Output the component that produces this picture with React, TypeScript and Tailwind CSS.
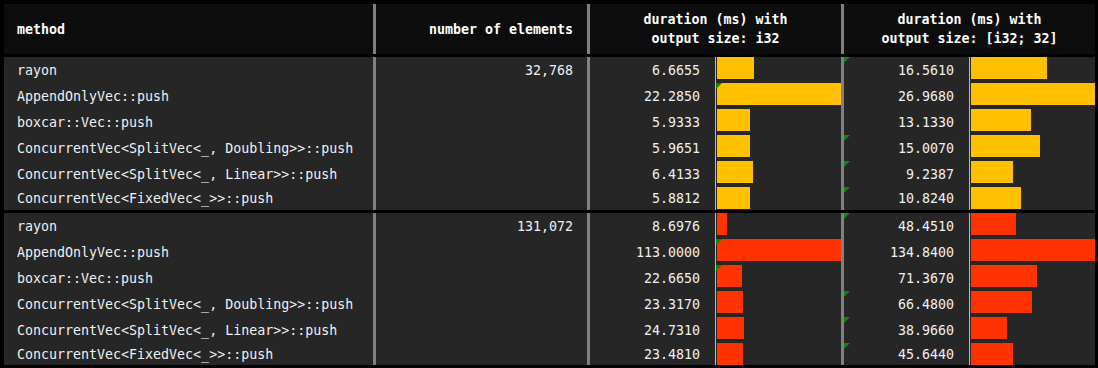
import React from "react";

interface BenchRow {
    method: string;
    small: number;
    large: number;
    flagSmallBar?: boolean;
    flagLarge?: boolean;
}

interface BenchGroup {
    count: string;
    color: string;
    rows: BenchRow[];
}

const groups: BenchGroup[] = [
    {
        count: "32,768",
        color: "#ffc000",
        rows: [
            { method: "rayon", small: 6.6655, large: 16.561, flagLarge: true },
            { method: "AppendOnlyVec::push", small: 22.285, large: 26.968, flagSmallBar: true },
            { method: "boxcar::Vec::push", small: 5.9333, large: 13.133 },
            { method: "ConcurrentVec<SplitVec<_, Doubling>>::push", small: 5.9651, large: 15.007, flagLarge: true },
            { method: "ConcurrentVec<SplitVec<_, Linear>>::push", small: 6.4133, large: 9.2387, flagLarge: true },
            { method: "ConcurrentVec<FixedVec<_>>::push", small: 5.8812, large: 10.824, flagLarge: true },
        ],
    },
    {
        count: "131,072",
        color: "#ff3300",
        rows: [
            { method: "rayon", small: 8.6976, large: 48.451, flagLarge: true },
            { method: "AppendOnlyVec::push", small: 113.0, large: 134.84, flagSmallBar: true },
            { method: "boxcar::Vec::push", small: 22.665, large: 71.367, flagSmallBar: true },
            { method: "ConcurrentVec<SplitVec<_, Doubling>>::push", small: 23.317, large: 66.48, flagLarge: true },
            { method: "ConcurrentVec<SplitVec<_, Linear>>::push", small: 24.731, large: 38.966, flagLarge: true },
            { method: "ConcurrentVec<FixedVec<_>>::push", small: 23.481, large: 45.644, flagLarge: true },
        ],
    },
];

const BAR_AREA = 124;

const Flag = () => (
    <div className="absolute left-0 top-0 w-0 h-0 border-t-[6px] border-t-[#0a8a0a] border-r-[6px] border-r-transparent" />
);

const Sep = () => <div className="w-[3px] shrink-0 self-stretch bg-[#808080]" />;

// duration cell: number on the left, bar on the right
const DurationCell = ({
    value,
    max,
    color,
    flagNumber,
    flagBar,
}: {
    value: number;
    max: number;
    color: string;
    flagNumber?: boolean;
    flagBar?: boolean;
}) => (
    <div className="flex w-[251px] shrink-0 h-full">
        <div className="relative w-[125px] shrink-0 flex items-center justify-end pr-[15px]">
            {flagNumber && <Flag />}
            {value.toFixed(4)}
        </div>
        <div className="w-[1px] shrink-0 bg-[#b8b8b8]" />
        <div className="relative w-[125px] shrink-0 pl-[1px]">
            <div className="h-[22px]" style={{ width: Math.round((value / max) * BAR_AREA), backgroundColor: color }} />
            {flagBar && <Flag />}
        </div>
    </div>
);

const GroupRows = ({ group, lastHeight }: { group: BenchGroup; lastHeight: string }) => {
    const maxSmall = Math.max(...group.rows.map(r => r.small));
    const maxLarge = Math.max(...group.rows.map(r => r.large));
    return (
        <div className="flex flex-col bg-[#262626]">
            {group.rows.map((row, i) => (
                <div
                    key={row.method}
                    className={`flex ${i === group.rows.length - 1 ? lastHeight : "h-[26px]"}`}
                >
                    <div className="w-[369px] shrink-0 flex items-center pl-[13px]">{row.method}</div>
                    <Sep />
                    <div className="w-[211px] shrink-0 flex items-center justify-end pr-[14px]">
                        {i === 0 ? group.count : ""}
                    </div>
                    <Sep />
                    <DurationCell value={row.small} max={maxSmall} color={group.color} flagBar={row.flagSmallBar} />
                    <Sep />
                    <DurationCell value={row.large} max={maxLarge} color={group.color} flagNumber={row.flagLarge} />
                </div>
            ))}
        </div>
    );
};

export default function App() {
    return (
        <div
            className="w-[1098px] h-[368px] bg-black pt-[4px] pl-[4px] pr-[3px] pb-[3px] overflow-hidden text-[13.3px] text-[#f0f0f0] leading-[19px]"
            style={{ fontFamily: '"DejaVu Sans Mono", "Liberation Mono", monospace' }}
        >
            {/* Header */}
            <div className="flex h-[50px] bg-[#0d0d0d] font-bold text-white">
                <div className="w-[369px] shrink-0 flex items-center pl-[13px]">method</div>
                <Sep />
                <div className="w-[211px] shrink-0 flex items-center justify-end pr-[14px]">number of elements</div>
                <Sep />
                <div className="w-[251px] shrink-0 flex flex-col items-center justify-center">
                    <span>duration (ms) with</span>
                    <span>output size: i32</span>
                </div>
                <Sep />
                <div className="w-[251px] shrink-0 flex flex-col items-center justify-center">
                    <span>duration (ms) with</span>
                    <span>output size: [i32; 32]</span>
                </div>
            </div>
            <div className="h-[3px]" />
            <GroupRows group={groups[0]} lastHeight="h-[23px]" />
            <div className="h-[3px]" />
            <GroupRows group={groups[1]} lastHeight="h-[22px]" />
        </div>
    );
}
